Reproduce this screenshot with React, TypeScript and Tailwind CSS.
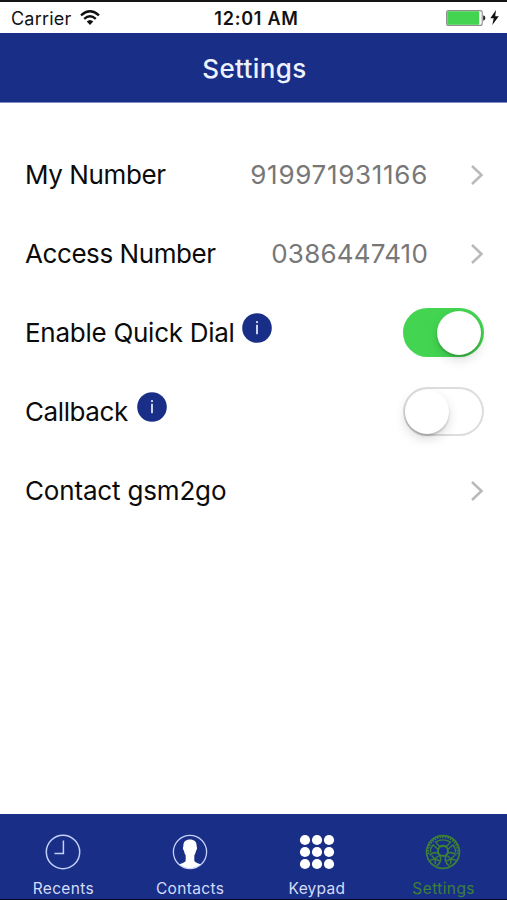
import { ReactNode, useState } from 'react';
import clsx from 'clsx';

type RowProps = {
  label: string;
  labelClass: string;
  info?: boolean;
  children: ReactNode;
};

type ToggleProps = {
  label: string;
  checked: boolean;
  onChange: (value: boolean) => void;
};

const Chevron = () => (
  <svg width="14" height="22" viewBox="0 0 14 22" fill="none" stroke="#b9b9bb" strokeWidth="2.5">
    <path d="M2 2 L11.5 11 L2 20" />
  </svg>
);

const InfoBadge = () => (
  <svg className="-mt-[9px]" width="30" height="30" viewBox="0 0 30 30">
    <circle cx="15" cy="15" r="14.8" fill="#192e87" />
    <circle cx="15" cy="9.1" r="1.1" fill="#dfe5fb" />
    <rect x="14.1" y="11.8" width="1.8" height="9.4" fill="#dfe5fb" />
  </svg>
);

const Toggle = ({ label, checked, onChange }: ToggleProps) => (
  <button
    type="button"
    role="switch"
    aria-label={label}
    aria-checked={checked}
    onClick={() => onChange(!checked)}
    className={clsx(
      'flex h-[49px] w-[81px] items-center rounded-full',
      checked
        ? 'justify-end bg-[#43d551] pr-[3px]'
        : 'justify-start bg-white pl-[2px] shadow-[inset_0_0_0_2px_#dddddf]',
    )}
  >
    <span className="size-[44px] rounded-full bg-white shadow-[0_5px_12px_rgba(0,0,0,0.14),0_2px_2px_rgba(0,0,0,0.18)]"></span>
  </button>
);

const Row = ({ label, labelClass, info, children }: RowProps) => (
  <div className="flex h-[79px] items-center justify-between pr-[23px] pl-[25px]">
    <div className="flex items-center">
      <span className={clsx('text-[26px] leading-8 whitespace-nowrap text-[#0b0b0b]', labelClass)}>{label}</span>
      {info && <InfoBadge />}
    </div>
    <div className="flex items-center">{children}</div>
  </div>
);

const RecentsIcon = () => (
  <svg width="36" height="36" viewBox="0 0 36 36" fill="none" stroke="#c3d0fa" strokeWidth="1.5">
    <circle cx="18" cy="18" r="16.7" />
    <path d="M18.4 6.5 V19.5 H9.5" />
  </svg>
);

const ContactsIcon = () => (
  <svg width="36" height="36" viewBox="0 0 36 36">
    <circle cx="18" cy="18" r="16.6" fill="none" stroke="#c3d0fa" strokeWidth="1.3" />
    <path
      d="M18 5.4 C22.6 5.4 25 8 24.6 12.6 C25.3 13 25.1 15.6 24.1 16.6 C23.7 19.2 22.8 20.6 22.3 21.6 V26.4 C22.6 28.6 26.2 29 28.6 30.2 A16.2 16.2 0 0 1 7.4 30.2 C9.8 29 13.4 28.6 13.7 26.4 V21.6 C13.2 20.6 12.3 19.2 11.9 16.6 C10.9 15.6 10.7 13 11.4 12.6 C11 8 13.4 5.4 18 5.4 Z"
      fill="#fff"
    />
  </svg>
);

const KeypadIcon = () => (
  <svg width="36" height="36" viewBox="0 0 36 36" fill="#fff">
    {[6, 18, 30].map((y) => [6, 18, 30].map((x) => <circle key={`${x}-${y}`} cx={x} cy={y} r="5.1" />))}
  </svg>
);

const SettingsIcon = () => (
  <svg className="-ml-px" width="36" height="36" viewBox="0 0 36 36" fill="none" stroke="#3c8136" strokeWidth="1.4">
    <circle cx="18" cy="18" r="16.4" strokeWidth="1.7" />
    <path d="M3.6 20 A14.6 14.6 0 1 1 32.4 20" strokeWidth="1.8" strokeDasharray="1.6 1.1" />
    <circle cx="18" cy="17" r="5" strokeWidth="1.9" />
    <path d="M10.6 8.2 Q18 3.6 25.4 8.2 L21.6 12.4 Q18 10.6 14.4 12.4 Z" />
    <path d="M8 10.8 Q5 14.6 5.4 18.6 M8 10.8 L12.8 15.2 M28 10.8 Q31 14.6 30.6 18.6 M28 10.8 L23.2 15.2" />
    <path d="M12.8 19 Q8 17.6 4.6 21.2 M23.2 19 Q28 17.6 31.4 21.2" strokeWidth="1.6" />
    <path d="M12.8 19 Q16.6 23 15.4 27 Q14.6 30 11.6 32.2 M23.2 19 Q19.4 23 20.6 27 Q21.4 30 24.4 32.2" strokeWidth="1.6" />
    <path d="M10 25 L6.6 21.4 M10 25 L13.6 21.8 M10 25 L14.8 27 M10 25 L10.4 30.4 M10 25 L4.6 26.4" />
    <path d="M26 25 L29.4 21.4 M26 25 L22.4 21.8 M26 25 L21.2 27 M26 25 L25.6 30.4 M26 25 L31.4 26.4" />
  </svg>
);

const tabs = [
  { name: 'Recents', icon: <RecentsIcon />, textClass: 'text-[#d3dcfa] tracking-[0.35px]' },
  { name: 'Contacts', icon: <ContactsIcon />, textClass: 'text-[#d3dcfa] tracking-[0.35px]' },
  { name: 'Keypad', icon: <KeypadIcon />, textClass: 'text-[#d3dcfa] tracking-[0.25px]' },
  { name: 'Settings', icon: <SettingsIcon />, textClass: 'text-[#3c8136] tracking-[0.4px]' },
];

const StatusBar = () => (
  <div className="grid h-[33px] grid-cols-3 items-center border-t-2 border-[#151515] bg-white pt-px pr-2 pl-[11px] text-[18px] text-[#111]">
    <div className="flex items-center gap-[9px]">
      <span className="tracking-[0.2px]">Carrier</span>
      <svg className="-mt-px" width="20" height="16" viewBox="0 0 20 16" fill="none" stroke="#111" strokeWidth="2.4">
        <path d="M1 5.3 Q10 -2.6 19 5.3" />
        <path d="M4.2 8.8 Q10 3.8 15.8 8.8" />
        <path d="M6.7 11.6 Q10 8.6 13.3 11.6 L10 15 Z" fill="#111" stroke="none" />
      </svg>
    </div>
    <span className="pl-[3px] text-center font-semibold tracking-[0.75px] whitespace-nowrap">12:01 AM</span>
    <div className="-mt-px flex items-center justify-end gap-1">
      <svg width="40" height="16" viewBox="0 0 40 16">
        <rect x="0.6" y="0.6" width="35.6" height="14.8" rx="2" fill="#fff" stroke="#8c8c8c" strokeWidth="1.1" />
        <rect x="1.2" y="1.2" width="32" height="13.6" rx="1" fill="#43d551" />
        <path d="M37.2 5.3 Q39.4 6 39.4 8 Q39.4 10 37.2 10.7 Z" fill="#222" />
      </svg>
      <svg width="9" height="15" viewBox="0 0 9 15" fill="#111">
        <path d="M6 0 L0.3 8.2 H3.7 L2.3 15 L8.8 6.2 H5.2 Z" />
      </svg>
    </div>
  </div>
);

export default function App() {
  const [quickDial, setQuickDial] = useState(true);
  const [callback, setCallback] = useState(false);

  return (
    <div className="flex h-[900px] w-[507px] flex-col overflow-hidden bg-white font-['Inter',sans-serif]">
      <StatusBar />

      <header className="flex h-[70px] items-center justify-center border-b border-[#7f8cc0] bg-[#192e87] pt-0.5 pl-0.5">
        <h1 className="text-[26px] font-medium tracking-[0.4px] text-[#eef2ff]">Settings</h1>
      </header>

      <main className="flex-1 pt-8">
        <Row label="My Number" labelClass="tracking-[-0.4px]">
          <span className="mr-[42px] text-[26px] tracking-[0.7px] text-[#777]">919971931166</span>
          <Chevron />
        </Row>
        <Row label="Access Number" labelClass="tracking-[-0.42px]">
          <span className="mr-[42px] text-[26px] tracking-[0.2px] text-[#777]">0386447410</span>
          <Chevron />
        </Row>
        <Row label="Enable Quick Dial" labelClass="w-[217px] tracking-[-0.27px]" info>
          <Toggle label="Enable Quick Dial" checked={quickDial} onChange={setQuickDial} />
        </Row>
        <Row label="Callback" labelClass="w-[112px] tracking-[-0.4px]" info>
          <Toggle label="Callback" checked={callback} onChange={setCallback} />
        </Row>
        <Row label="Contact gsm2go" labelClass="tracking-[-0.17px]">
          <Chevron />
        </Row>
      </main>

      <nav className="grid h-[86px] grid-cols-4 border-b border-[#050a24] bg-[#192e87]">
        {tabs.map((tab) => (
          <button key={tab.name} type="button" className="flex flex-col items-center pt-5">
            {tab.icon}
            <span className={clsx('mt-[9px] text-[15.5px] leading-5', tab.textClass)}>{tab.name}</span>
          </button>
        ))}
      </nav>
    </div>
  );
}
